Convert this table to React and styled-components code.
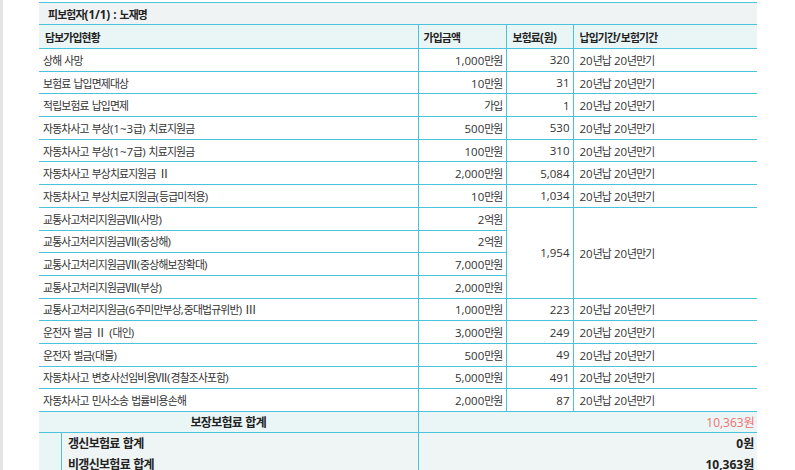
import React from 'react';
import styled, { createGlobalStyle } from 'styled-components';

const GlobalStyle = createGlobalStyle`
    html, body {
        margin: 0;
        padding: 0;
        background: #ffffff;
    }
    body {
        font-family: "Open Sans", "Noto Sans CJK KR", sans-serif;
        font-size: 11.5px;
        color: #333;
    }
`;

const LINE = '#4cc3dc';
const HANGUL = /([\uAC00-\uD7A3]+)/;

// hangul runs get their own (narrower) size so widths follow the original font
const Txt = ({ children, size = 10.8, ls = -0.8 }) =>
    String(children).split(HANGUL).map((part, i) =>
        HANGUL.test(part) ? <Han key={i} size={size} ls={ls}>{part}</Han> : part
    );

const rows = [
    { name: '상해 사망', amount: '1,000만원', premium: '320', period: '20년납 20년만기' },
    { name: '보험료 납입면제대상', amount: '10만원', premium: '31', period: '20년납 20년만기' },
    { name: '적립보험료 납입면제', amount: '가입', premium: '1', period: '20년납 20년만기' },
    { name: '자동차사고 부상(1~3급) 치료지원금', amount: '500만원', premium: '530', period: '20년납 20년만기' },
    { name: '자동차사고 부상(1~7급) 치료지원금', amount: '100만원', premium: '310', period: '20년납 20년만기' },
    { name: '자동차사고 부상치료지원금 Ⅱ', amount: '2,000만원', premium: '5,084', period: '20년납 20년만기' },
    { name: '자동차사고 부상치료지원금(등급미적용)', amount: '10만원', premium: '1,034', period: '20년납 20년만기' },
    { name: '교통사고처리지원금Ⅶ(사망)', amount: '2억원', premium: '1,954', period: '20년납 20년만기', span: 4 },
    { name: '교통사고처리지원금Ⅶ(중상해)', amount: '2억원', skip: true },
    { name: '교통사고처리지원금Ⅶ(중상해보장확대)', amount: '7,000만원', skip: true },
    { name: '교통사고처리지원금Ⅶ(부상)', amount: '2,000만원', skip: true },
    { name: '교통사고처리지원금(6주미만부상,중대법규위반) Ⅲ', amount: '1,000만원', premium: '223', period: '20년납 20년만기' },
    { name: '운전자 벌금 Ⅱ (대인)', amount: '3,000만원', premium: '249', period: '20년납 20년만기' },
    { name: '운전자 벌금(대물)', amount: '500만원', premium: '49', period: '20년납 20년만기' },
    { name: '자동차사고 변호사선임비용Ⅶ(경찰조사포함)', amount: '5,000만원', premium: '491', period: '20년납 20년만기' },
    { name: '자동차사고 민사소송 법률비용손해', amount: '2,000만원', premium: '87', period: '20년납 20년만기' },
];

const Coverage = () => {
    return (
        <Page>
            <SideStrip />
            <Table>
                <colgroup>
                    <col style={{ width: '379px' }} />
                    <col style={{ width: '88px' }} />
                    <col style={{ width: '67px' }} />
                    <col style={{ width: '184px' }} />
                </colgroup>
                <tbody>
                    <InsuredRow>
                        <InsuredCell colSpan={4}><Txt>피보험자(1/1) : 노재명</Txt></InsuredCell>
                    </InsuredRow>
                    <HeadRow>
                        <HeadCell><Txt>담보가입현황</Txt></HeadCell>
                        <HeadCell><Txt>가입금액</Txt></HeadCell>
                        <HeadCell pad="6px"><Txt>보험료(원)</Txt></HeadCell>
                        <HeadCell pad="6px"><Txt>납입기간/보험기간</Txt></HeadCell>
                    </HeadRow>
                    {rows.map((row, index) => (
                        <DataRow key={index}>
                            <NameCell><Txt>{row.name}</Txt></NameCell>
                            <NumCell><Txt>{row.amount}</Txt></NumCell>
                            {!row.skip && (
                                <>
                                    <NumCell rowSpan={row.span || 1}>{row.premium}</NumCell>
                                    <PeriodCell rowSpan={row.span || 1}><Txt>{row.period}</Txt></PeriodCell>
                                </>
                            )}
                        </DataRow>
                    ))}
                    <TotalRow>
                        <TotalLabel><Txt size={12} ls={-0.7}>보장보험료 합계</Txt></TotalLabel>
                        <TotalValue colSpan={3}><Txt size={12} ls={-0.7}>10,363원</Txt></TotalValue>
                    </TotalRow>
                    <tr>
                        <SubWrap colSpan={4}>
                            <SubTable>
                                <colgroup>
                                    <col style={{ width: '357px' }} />
                                    <col style={{ width: '339px' }} />
                                </colgroup>
                                <tbody>
                                    <SubRow>
                                        <SubLabel><Txt size={12} ls={-0.7}>갱신보험료 합계</Txt></SubLabel>
                                        <SubValue><Txt size={12} ls={-0.7}>0원</Txt></SubValue>
                                    </SubRow>
                                    <SubRow>
                                        <SubLabel><Txt size={12} ls={-0.7}>비갱신보험료 합계</Txt></SubLabel>
                                        <SubValue><Txt size={12} ls={-0.7}>10,363원</Txt></SubValue>
                                    </SubRow>
                                </tbody>
                            </SubTable>
                        </SubWrap>
                    </tr>
                </tbody>
            </Table>
        </Page>
    );
};

export default function App() {
    return (
        <>
            <GlobalStyle />
            <Coverage />
        </>
    );
}

const Han = styled.span`
    font-family: "Noto Sans CJK KR", sans-serif;
    font-size: ${p => p.size}px;
    letter-spacing: ${p => p.ls}px;
`;

const Page = styled.div`
    display: flex;
    align-items: flex-start;
    min-height: 470px;
    padding-top: 2px;
    box-sizing: border-box;
`;

const SideStrip = styled.div`
    width: 3px;
    align-self: stretch;
    margin-top: -2px;
    background: #e4e4e4;
    flex-shrink: 0;
`;

const Table = styled.table`
    width: 718px;
    margin-left: 36px;
    border-collapse: collapse;
    table-layout: fixed;

    td {
        border-top: 1px solid ${LINE};
        border-bottom: 1px solid ${LINE};
        padding: 0;
        white-space: nowrap;
        overflow: hidden;
    }
`;

const InsuredRow = styled.tr`
    height: 22px;
`;

const InsuredCell = styled.td`
    background: #eff3f3;
    font-weight: 700;
    color: #222;
    padding-left: 9px !important;
`;

const HeadRow = styled.tr`
    height: 24px;
`;

const HeadCell = styled.td`
    background: #eaf6f6;
    font-weight: 700;
    color: #222;
    padding-left: ${p => p.pad || '5px'} !important;
    border-left: 1px solid ${LINE};
    &:first-child {
        border-left: none;
        padding-left: 6px !important;
    }
`;

const DataRow = styled.tr`
    height: 22.7px;
`;

const NameCell = styled.td`
    padding-left: 4px !important;
    color: #333;
`;

const NumCell = styled.td`
    text-align: right;
    padding-right: 3px !important;
    border-left: 1px solid ${LINE};
    color: #333;
`;

const PeriodCell = styled.td`
    padding-left: 6px !important;
    border-left: 1px solid ${LINE};
    color: #333;
`;

const TotalRow = styled.tr`
    height: 21px;
    font-size: 12px;
`;

const TotalLabel = styled.td`
    background: #eaf6f6;
    text-align: center;
    font-weight: 700;
    color: #222;
`;

const TotalValue = styled.td`
    background: #eaf6f6;
    text-align: right;
    padding-right: 3px !important;
    border-left: 1px solid ${LINE};
    color: #f46f6f;
`;

const SubWrap = styled.td`
    background: #eaf6f6;
    padding-left: 22px !important;
    border-bottom: none !important;
`;

const SubTable = styled.table`
    width: 696px;
    border-collapse: collapse;
    table-layout: fixed;
    background: #eff4f4;
    border-left: 1px solid ${LINE};
`;

const SubRow = styled.tr`
    height: 20.5px;
    font-size: 12px;

    td {
        border: none;
    }
`;

const SubLabel = styled.td`
    padding-left: 6px !important;
    font-weight: 700;
    color: #222;
`;

const SubValue = styled.td`
    text-align: right;
    padding-right: 4px !important;
    font-weight: 700;
    color: #222;
    border-left: 1px solid ${LINE} !important;
`;
